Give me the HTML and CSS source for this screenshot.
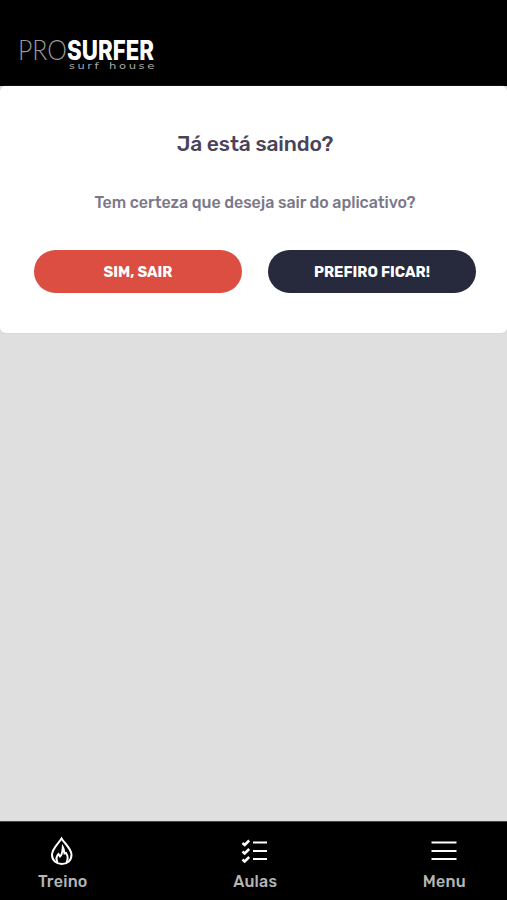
FILE: index.html
```
<!doctype html>
<html lang="pt-BR">

<head>
  <meta charset="utf-8">
  <meta name="viewport" content="width=device-width, initial-scale=1.0">
  <title>Pro Surfer</title>
  <link rel="stylesheet" href="styles.css">
</head>

<body>

  <header class="head">
    <svg class="logo" width="150" height="40" viewBox="0 0 150 40" role="img" aria-label="Pro Surfer surf house">
      <text class="logo-pro" x="-2" y="26.500" textLength="49" lengthAdjust="spacingAndGlyphs">PRO</text>
      <text class="logo-surfer" x="47" y="26.500" textLength="87" lengthAdjust="spacingAndGlyphs">SURFER</text>
      <text class="logo-sub" x="49" y="35.500" textLength="32" lengthAdjust="spacingAndGlyphs">surf</text>
      <text class="logo-sub" x="89" y="35.500" textLength="48" lengthAdjust="spacingAndGlyphs">house</text>
    </svg>
  </header>

  <main>
    <div class="modal-content">
      <h2>Já está saindo?</h2>
      <p>Tem certeza que deseja sair do aplicativo?</p>
      <div class="buttons">
        <button class="btn-danger">SIM, SAIR</button>
        <button class="btn-dark">PREFIRO FICAR!</button>
      </div>
    </div>
  </main>

  <nav class="tabs">
    <a class="tab">
      <svg width="28" height="30" viewBox="0 0 28 30">
        <path d="M12.500 2.500C9.500 7.500 3 12.500 3 18.800C3 24.500 7.500 28 12.800 28C18.500 28 22.500 24.500 22.500 18.800C22.500 12.500 15.500 7.500 12.500 2.500Z" />
        <path d="M8.500 26.500C6.800 23 7.500 20 9.500 18L11 20.500C13.500 18.500 13.500 15 13.800 11C15 13 15.200 15 15.500 17.500L17 17C19 20 19 23.500 17.500 26.500" />
      </svg>
      <span>Treino</span>
    </a>
    <a class="tab">
      <svg width="28" height="30" viewBox="0 0 28 30">
        <path class="bar" d="M12 6.500H26M12 15H26M12 23H26" />
        <path class="check" d="M1.500 7L3.700 9L8.200 4.500M1.500 15.500L3.700 17.500L8.200 13M1.500 23.500L3.700 25.500L8.200 21" />
      </svg>
      <span>Aulas</span>
    </a>
    <a class="tab">
      <svg width="28" height="30" viewBox="0 0 28 30">
        <path d="M1.500 6.500H26.500M1.500 15H26.500M1.500 23H26.500" />
      </svg>
      <span>Menu</span>
    </a>
  </nav>

</body>

</html>
```
FILE: styles.css
```
* {
  margin: 0;
  padding: 0;
  box-sizing: border-box;
}

body {
  display: flex;
  flex-direction: column;
  height: 100vh;
  font-family: Rubik, Roboto, sans-serif;
  background: #dfdfdf;
}

.head {
  height: 86px;
  padding: 33px 20px 0;
  background: #000;
}

.logo {
  display: block;
  overflow: visible;
}

.logo-pro {
  font: 300 27px Lato, sans-serif;
  fill: #999;
}

.logo-surfer {
  font: 800 26.500px Inter, sans-serif;
  fill: #fff;
}

.logo-sub {
  font: 9px "DejaVu Sans", sans-serif;
  letter-spacing: 2px;
  fill: #aaa;
}

main {
  flex: 1;
}

.modal-content {
  height: 247px;
  padding: 45px 31px 0 34px;
  background: #fff;
  border-radius: 5px;
  box-shadow: 0 0 1px #aaa;
  text-align: center;
}

.modal-content h2 {
  font-size: 21px;
  font-weight: 500;
  line-height: 26px;
  letter-spacing: -.1px;
  color: #494459;
}

.modal-content p {
  margin-top: 36px;
  font-size: 16px;
  font-weight: 500;
  line-height: 20px;
  letter-spacing: -.05px;
  color: #7b7889;
}

.buttons {
  display: grid;
  grid-template-columns: 1fr 1fr;
  gap: 26px;
  margin-top: 37px;
}

.buttons button {
  height: 43px;
  border: none;
  border-radius: 22px;
  font-family: inherit;
  font-size: 14.700px;
  font-weight: 700;
  color: #fff;
}

.btn-danger {
  background: #dc4e41;
}

.btn-dark {
  background: #27293d;
}

.tabs {
  display: flex;
  justify-content: space-between;
  height: 79px;
  padding: 14px 41px 0 38px;
  background: #000;
  border-top: 1px solid #444;
}

.tab {
  display: flex;
  flex-direction: column;
  align-items: center;
  color: #b5b5b5;
  font-size: 16px;
  font-weight: 500;
  line-height: 20px;
  letter-spacing: .25px;
}

.tab span {
  margin-top: 6px;
}

.tab svg {
  fill: none;
  stroke: #fff;
  stroke-width: 2;
}

.tab .check {
  stroke-width: 2.500;
}
```
